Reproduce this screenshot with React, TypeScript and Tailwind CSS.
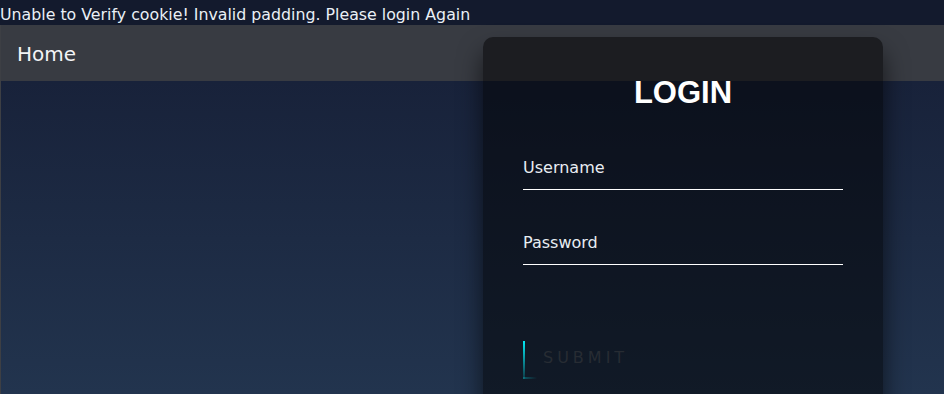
import React, { useState } from 'react';

const LoginBox: React.FC = () => {
  const [username, setUsername] = useState('');
  const [password, setPassword] = useState('');

  return (
    <div className="absolute left-[483px] top-[37px] w-[400px] rounded-[10px] bg-black/50 px-10 pt-10 pb-10 shadow-[0_15px_25px_rgba(0,0,0,0.6)]">
      <h2 className="mb-[38px] text-center font-['Liberation_Sans',Arial,sans-serif] text-[31px] font-bold leading-none text-white">
        LOGIN
      </h2>
      <form onSubmit={(e) => e.preventDefault()}>
        {/* Username */}
        <div className="relative mb-[31px]">
          <input
            type="text"
            value={username}
            onChange={(e) => setUsername(e.target.value)}
            className="box-border block h-[44px] w-full border-b border-white bg-transparent text-[16px] text-white outline-none"
          />
          <label className="pointer-events-none absolute left-0 top-0 pt-[12px] text-[16px] leading-[19px] text-[#e8edf2]">
            Username
          </label>
        </div>

        {/* Password */}
        <div className="relative">
          <input
            type="password"
            value={password}
            onChange={(e) => setPassword(e.target.value)}
            className="box-border block h-[44px] w-full border-b border-white bg-transparent text-[16px] text-white outline-none"
          />
          <label className="pointer-events-none absolute left-0 top-0 pt-[12px] text-[16px] leading-[19px] text-[#e8edf2]">
            Password
          </label>
        </div>

        {/* Submit */}
        <button
          type="submit"
          className="relative mt-[76px] flex h-[38px] items-start overflow-hidden pl-5 pr-5 pt-[7px] text-[16px] uppercase leading-[19px] tracking-[4px] text-[#272c33]"
        >
          <span className="absolute left-0 top-0 h-full w-[2px] bg-gradient-to-b from-[#03e9f4] to-[#03e9f4]/15" />
          <span className="absolute bottom-0 left-0 h-[2px] w-[14px] bg-gradient-to-r from-[#03e9f4]/30 to-transparent" />
          Submit
        </button>
      </form>
    </div>
  );
};

const App: React.FC = () => {
  return (
    <div className="relative flex h-[394px] w-full flex-col overflow-hidden font-['DejaVu_Sans',sans-serif]">
      {/* Error banner */}
      <div className="h-[25px] shrink-0 bg-[#131a2d] pt-[5px] text-[15.8px] leading-[19px] text-[#eaf0f6]">
        Unable to Verify cookie! Invalid padding. Please login Again
      </div>

      <div className="flex flex-1 flex-col border-l border-[#3d3f44]">
        {/* Navbar */}
        <nav className="flex h-[56px] shrink-0 items-center bg-[#383b42] pl-4 pt-[2px]">
          <span className="text-[20px] text-[#f3f4f6]">Home</span>
        </nav>

        {/* Main */}
        <main className="flex-1 bg-gradient-to-b from-[#18223a] to-[#22344e]" />
      </div>

      <LoginBox />
    </div>
  );
};

export default App;
